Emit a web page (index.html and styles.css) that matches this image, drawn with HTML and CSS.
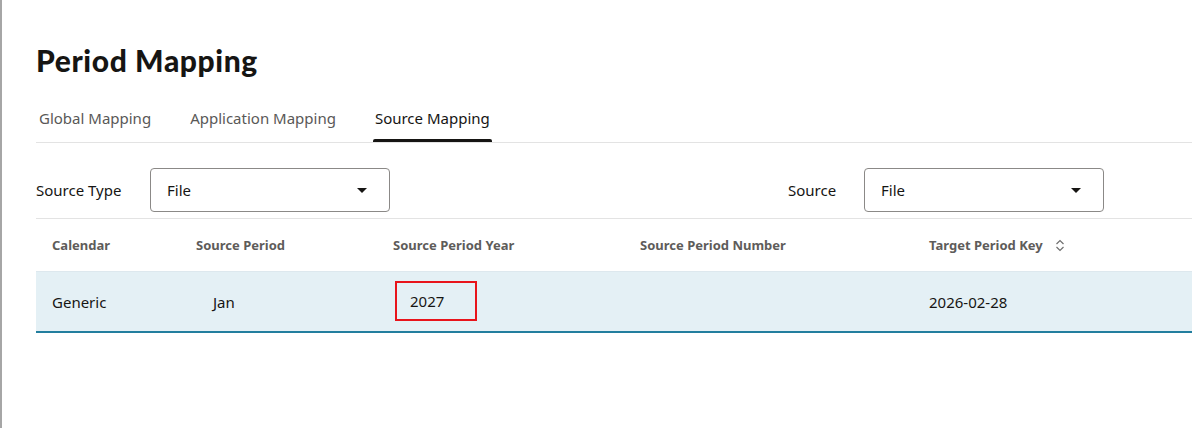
FILE: index.html
```html
<!DOCTYPE html>
<html lang="en">
  <head>
    <meta charset="utf-8" />
    <title>Period Mapping</title>
    <link rel="stylesheet" href="styles.css">
  </head>
  <body>
    <div id="page">
      <h1 class="page-title">Period Mapping</h1>

      <div class="tabs">
        <span class="tab">Global Mapping</span>
        <span class="tab">Application Mapping</span>
        <span class="tab tab-active">Source Mapping</span>
      </div>

      <div class="filters">
        <div class="filter">
          <label class="filter-label filter-label-type">Source Type</label>
          <div class="select">
            <span>File</span>
            <span class="caret"></span>
          </div>
        </div>
        <div class="filter">
          <label class="filter-label filter-label-source">Source</label>
          <div class="select">
            <span>File</span>
            <span class="caret"></span>
          </div>
        </div>
      </div>

      <div class="grid">
        <div class="grid-row grid-head">
          <div class="cell">Calendar</div>
          <div class="cell">Source Period</div>
          <div class="cell">Source Period Year</div>
          <div class="cell">Source Period Number</div>
          <div class="cell">
            Target Period Key
            <svg class="sort-icon" width="10" height="13" viewBox="0 0 10 13">
              <path d="M1.5 5 L5 1.5 L8.5 5 M1.5 8 L5 11.5 L8.5 8" fill="none" stroke="#6f6f6f" stroke-width="1.2" />
            </svg>
          </div>
        </div>
        <div class="grid-row grid-data">
          <div class="cell">Generic</div>
          <div class="cell cell-indent">Jan</div>
          <div class="cell"><span class="year-box">2027</span></div>
          <div class="cell"></div>
          <div class="cell">2026-02-28</div>
        </div>
      </div>
    </div>
  </body>
</html>
```

FILE: styles.css
```css
body {
  margin: 0;
  background-color: #ffffff;
  color: #161513;
  font-family: "Noto Sans", "Open Sans", sans-serif;
  height: 428px;
  overflow: hidden;
}

#page {
  border-left: 2px solid #a6a6a6;
  padding-left: 34px;
  padding-top: 40px;
  height: 388px;
}

.page-title {
  margin: 0;
  font-family: Lato, "Noto Sans", sans-serif;
  font-weight: 900;
  font-size: 30px;
  line-height: 40px;
  letter-spacing: 0.6px;
}

.tabs {
  display: flex;
  gap: 35px;
  margin-top: 22px;
  padding-left: 1px;
  border-bottom: 1px solid #e3e3e3;
}

.tab {
  position: relative;
  padding: 0 2px;
  height: 40px;
  line-height: 32px;
  font-size: 15px;
  color: #595857;
}

.tab-active {
  color: #161513;
}

/* underline of the selected tab, rounded on top */
.tab-active::after {
  content: "";
  position: absolute;
  left: 0;
  right: 0;
  bottom: 0;
  height: 3px;
  background-color: #161513;
  border-radius: 2px 2px 0 0;
}

.filters {
  display: flex;
  padding: 25px 0 6px 0;
  border-bottom: 1px solid #e3e3e3;
}

.filter {
  display: flex;
  align-items: center;
}

.filter-label {
  font-size: 15px;
  color: #161513;
}

.filter-label-type {
  width: 114px;
}

.filter-label-source {
  width: 76px;
  margin-left: 398px;
}

.select {
  box-sizing: border-box;
  width: 240px;
  height: 44px;
  border: 1px solid #8b8987;
  border-radius: 4px;
  display: flex;
  align-items: center;
  justify-content: space-between;
  padding: 0 22px 0 16px;
  font-size: 15px;
}

.caret {
  width: 0;
  height: 0;
  border-left: 5px solid transparent;
  border-right: 5px solid transparent;
  border-top: 5px solid #161513;
}

.grid-row {
  display: grid;
  grid-template-columns: 144px 197px 247px 289px 1fr;
  align-items: center;
}

.grid-head {
  height: 52px;
  font-size: 13px;
  font-weight: 700;
  color: #5e5c5a;
}

.grid-data {
  height: 59px;
  background-color: #e4f0f5;
  border-top: 1px solid #dde8ee;
  border-bottom: 2px solid #227e9e;
  font-size: 15px;
}

.cell {
  padding-left: 16px;
  display: flex;
  align-items: center;
}

.cell-indent {
  padding-left: 33px;
}

.sort-icon {
  margin-left: 12px;
}

.year-box {
  box-sizing: border-box;
  margin-left: 2px;
  margin-top: -2px;
  width: 82px;
  height: 40px;
  border: 2px solid #e8141b;
  padding-left: 13px;
  display: flex;
  align-items: center;
}
```
